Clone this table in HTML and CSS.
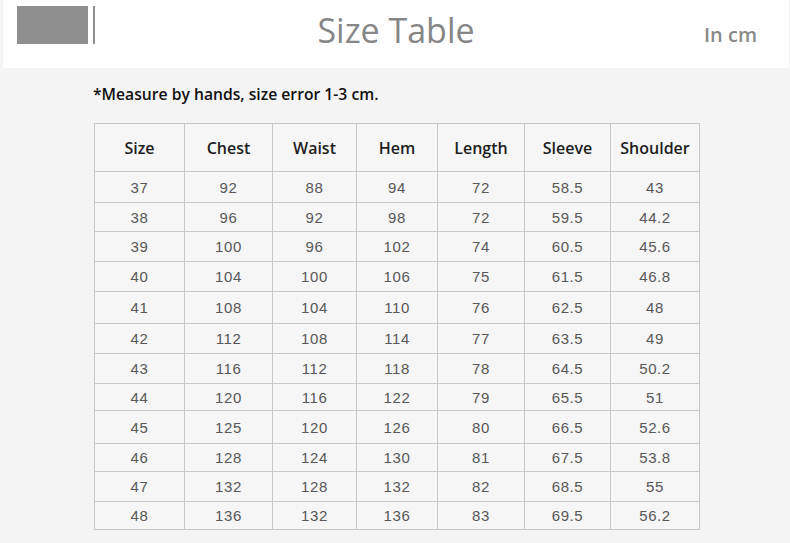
FILE: index.html
```html
<!DOCTYPE html>
<html lang="en">
<head>
<meta charset="utf-8">
<title>Size Table</title>
<link rel="stylesheet" href="styles.css">
</head>
<body>
<header class="topbar">
  <div class="brand">
    <span class="brand-block"></span>
    <span class="brand-bar"></span>
  </div>
  <h1 class="title">Size Table</h1>
  <div class="unit">In cm</div>
</header>
<main class="content">
  <p class="note">*Measure by hands, size error 1-3 cm.</p>
  <table class="sizes">
    <colgroup>
      <col class="c1"><col class="c2"><col class="c3"><col class="c4"><col class="c5"><col class="c6"><col class="c7">
    </colgroup>
    <thead>
      <tr><th>Size</th><th>Chest</th><th>Waist</th><th>Hem</th><th>Length</th><th>Sleeve</th><th>Shoulder</th></tr>
    </thead>
    <tbody>
      <tr><td>37</td><td>92</td><td>88</td><td>94</td><td>72</td><td>58.5</td><td>43</td></tr>
      <tr><td>38</td><td>96</td><td>92</td><td>98</td><td>72</td><td>59.5</td><td>44.2</td></tr>
      <tr><td>39</td><td>100</td><td>96</td><td>102</td><td>74</td><td>60.5</td><td>45.6</td></tr>
      <tr><td>40</td><td>104</td><td>100</td><td>106</td><td>75</td><td>61.5</td><td>46.8</td></tr>
      <tr><td>41</td><td>108</td><td>104</td><td>110</td><td>76</td><td>62.5</td><td>48</td></tr>
      <tr><td>42</td><td>112</td><td>108</td><td>114</td><td>77</td><td>63.5</td><td>49</td></tr>
      <tr><td>43</td><td>116</td><td>112</td><td>118</td><td>78</td><td>64.5</td><td>50.2</td></tr>
      <tr><td>44</td><td>120</td><td>116</td><td>122</td><td>79</td><td>65.5</td><td>51</td></tr>
      <tr><td>45</td><td>125</td><td>120</td><td>126</td><td>80</td><td>66.5</td><td>52.6</td></tr>
      <tr><td>46</td><td>128</td><td>124</td><td>130</td><td>81</td><td>67.5</td><td>53.8</td></tr>
      <tr><td>47</td><td>132</td><td>128</td><td>132</td><td>82</td><td>68.5</td><td>55</td></tr>
      <tr><td>48</td><td>136</td><td>132</td><td>136</td><td>83</td><td>69.5</td><td>56.2</td></tr>
    </tbody>
  </table>
</main>
</body>
</html>
```
FILE: styles.css
```css
html, body {
  margin: 0;
  padding: 0;
}
body {
  background: #f4f4f4;
  width: 790px;
  height: 543px;
  overflow: hidden;
  font-family: "Open Sans", "Liberation Sans", sans-serif;
}
.topbar {
  margin: 0 1px 0 3px;
  height: 68px;
  background: #ffffff;
  display: grid;
  grid-template-columns: 1fr auto 1fr;
  align-items: start;
}
.brand {
  display: flex;
  gap: 5px;
  padding: 6px 0 0 14px;
}
.brand-block {
  display: block;
  width: 71px;
  height: 38px;
  background: #8f8f8f;
}
.brand-bar {
  display: block;
  width: 2px;
  height: 38px;
  background: #8f8f8f;
}
.title {
  margin: 7px 0 0 0;
  font-size: 34px;
  line-height: 46px;
  font-weight: 400;
  color: #868686;
}
.unit {
  justify-self: end;
  margin: 21px 32px 0 0;
  font-size: 20px;
  line-height: 28px;
  font-weight: 600;
  color: #8a8a8a;
}
.content {
  padding: 15px 0 0 94px;
}
.note {
  margin: 0 0 18px -1px;
  font-size: 15.7px;
  line-height: 22px;
  font-weight: 600;
  color: #111111;
}
.sizes {
  border-collapse: collapse;
  table-layout: fixed;
  width: 605px;
  background: #f6f6f6;
}
.c1 { width: 90px; }
.c2 { width: 88px; }
.c3 { width: 84px; }
.c4 { width: 81px; }
.c5 { width: 87px; }
.c6 { width: 86px; }
.c7 { width: 89px; }
.sizes th, .sizes td {
  border: 1px solid #c6c6cb;
  padding: 0;
  text-align: center;
  vertical-align: middle;
}
.sizes th {
  height: 47px;
  font-size: 16px;
  font-weight: 600;
  color: #1e1e1e;
}
.sizes td {
  height: 29px;
  font-family: "Liberation Sans", Arial, sans-serif;
  font-size: 15px;
  letter-spacing: 0.6px;
  color: #585858;
}
.sizes tbody tr:nth-child(1) td { height: 30px; }
.sizes tbody tr:nth-child(2) td { height: 28px; }
.sizes tbody tr:nth-child(5) td { height: 31px; }
.sizes tbody tr:nth-child(8) td { height: 26px; }
.sizes tbody tr:nth-child(9) td { height: 32px; }
.sizes tbody tr:nth-child(10) td { height: 27px; }
.sizes tbody tr:nth-child(12) td { height: 27px; }
```
